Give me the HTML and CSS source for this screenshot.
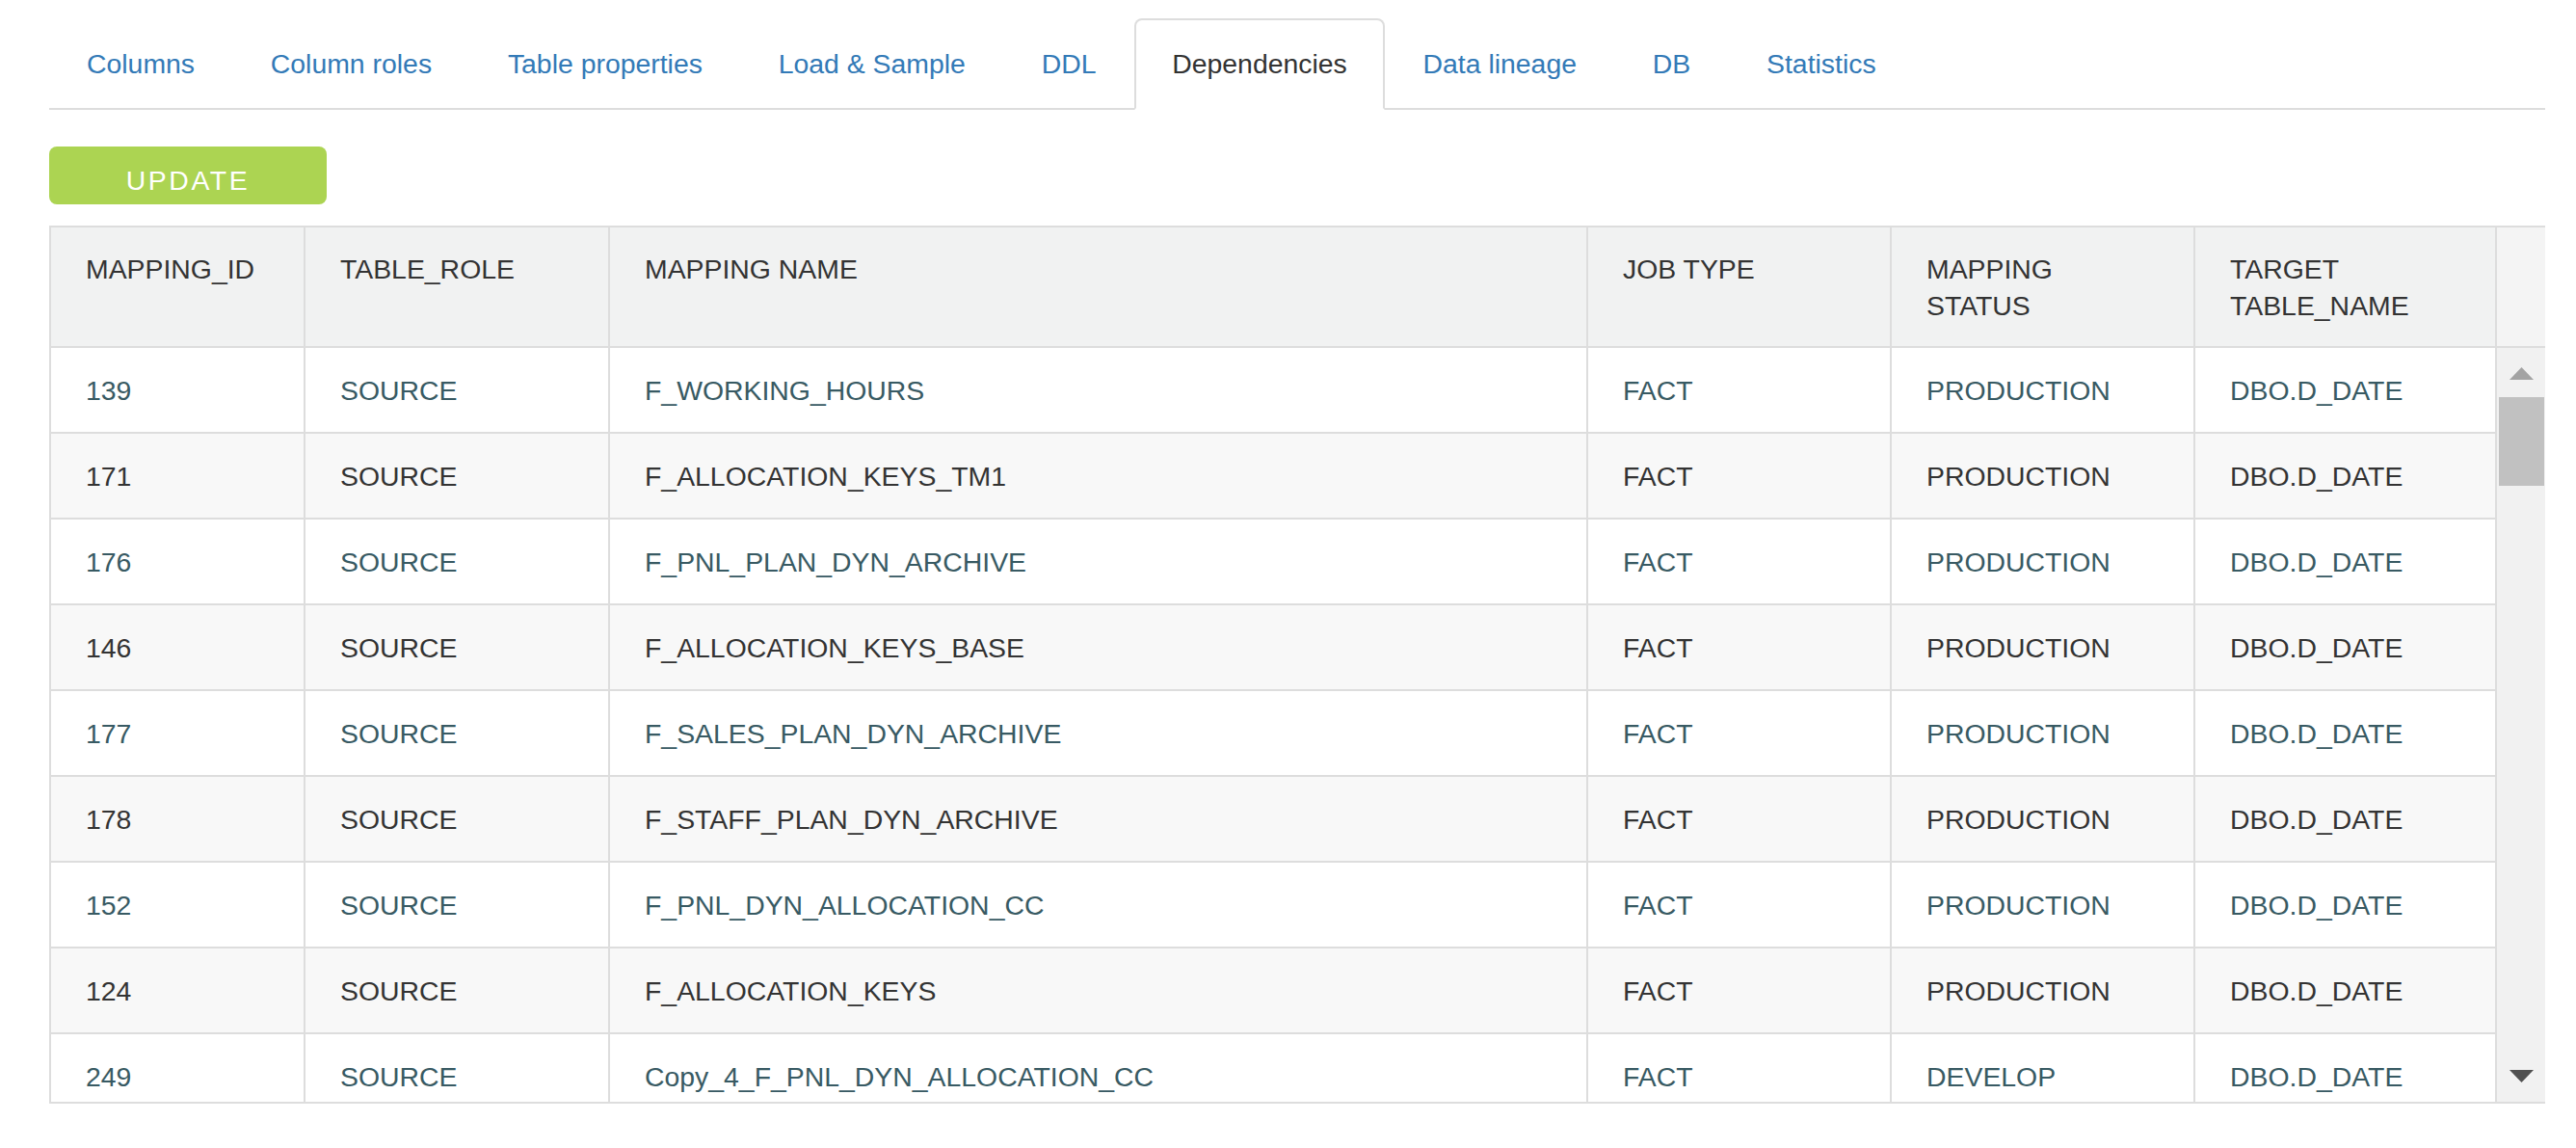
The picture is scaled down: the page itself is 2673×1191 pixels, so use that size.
FILE: index.html
```html
<!DOCTYPE html>
<html lang="en">
<head>
<meta charset="utf-8">
<title>Dependencies</title>
<link rel="stylesheet" href="styles.css">
</head>
<body>
<div class="page">
  <ul class="tabs">
    <li class="tab"><a href="#">Columns</a></li>
    <li class="tab"><a href="#">Column roles</a></li>
    <li class="tab"><a href="#">Table properties</a></li>
    <li class="tab"><a href="#">Load &amp; Sample</a></li>
    <li class="tab"><a href="#">DDL</a></li>
    <li class="tab active"><a href="#">Dependencies</a></li>
    <li class="tab"><a href="#">Data lineage</a></li>
    <li class="tab"><a href="#">DB</a></li>
    <li class="tab"><a href="#">Statistics</a></li>
  </ul>

  <button class="btn-update" type="button">UPDATE</button>

  <div class="grid">
    <div class="grid-head">
      <div class="row head-row">
        <div class="cell">MAPPING_ID</div>
        <div class="cell">TABLE_ROLE</div>
        <div class="cell">MAPPING NAME</div>
        <div class="cell">JOB TYPE</div>
        <div class="cell">MAPPING STATUS</div>
        <div class="cell">TARGET TABLE_NAME</div>
      </div>
      <div class="corner"></div>
    </div>
    <div class="grid-body">
      <div class="rows">
        <div class="row body-row odd">
          <div class="cell">139</div><div class="cell">SOURCE</div><div class="cell">F_WORKING_HOURS</div><div class="cell">FACT</div><div class="cell">PRODUCTION</div><div class="cell">DBO.D_DATE</div>
        </div>
        <div class="row body-row even">
          <div class="cell">171</div><div class="cell">SOURCE</div><div class="cell">F_ALLOCATION_KEYS_TM1</div><div class="cell">FACT</div><div class="cell">PRODUCTION</div><div class="cell">DBO.D_DATE</div>
        </div>
        <div class="row body-row odd">
          <div class="cell">176</div><div class="cell">SOURCE</div><div class="cell">F_PNL_PLAN_DYN_ARCHIVE</div><div class="cell">FACT</div><div class="cell">PRODUCTION</div><div class="cell">DBO.D_DATE</div>
        </div>
        <div class="row body-row even">
          <div class="cell">146</div><div class="cell">SOURCE</div><div class="cell">F_ALLOCATION_KEYS_BASE</div><div class="cell">FACT</div><div class="cell">PRODUCTION</div><div class="cell">DBO.D_DATE</div>
        </div>
        <div class="row body-row odd">
          <div class="cell">177</div><div class="cell">SOURCE</div><div class="cell">F_SALES_PLAN_DYN_ARCHIVE</div><div class="cell">FACT</div><div class="cell">PRODUCTION</div><div class="cell">DBO.D_DATE</div>
        </div>
        <div class="row body-row even">
          <div class="cell">178</div><div class="cell">SOURCE</div><div class="cell">F_STAFF_PLAN_DYN_ARCHIVE</div><div class="cell">FACT</div><div class="cell">PRODUCTION</div><div class="cell">DBO.D_DATE</div>
        </div>
        <div class="row body-row odd">
          <div class="cell">152</div><div class="cell">SOURCE</div><div class="cell">F_PNL_DYN_ALLOCATION_CC</div><div class="cell">FACT</div><div class="cell">PRODUCTION</div><div class="cell">DBO.D_DATE</div>
        </div>
        <div class="row body-row even">
          <div class="cell">124</div><div class="cell">SOURCE</div><div class="cell">F_ALLOCATION_KEYS</div><div class="cell">FACT</div><div class="cell">PRODUCTION</div><div class="cell">DBO.D_DATE</div>
        </div>
        <div class="row body-row odd">
          <div class="cell">249</div><div class="cell">SOURCE</div><div class="cell">Copy_4_F_PNL_DYN_ALLOCATION_CC</div><div class="cell">FACT</div><div class="cell">DEVELOP</div><div class="cell">DBO.D_DATE</div>
        </div>
      </div>
      <div class="vscroll">
        <svg class="arrow arrow-up" width="25" height="13" viewBox="0 0 25 13"><polygon points="12.5,0 25,13 0,13"/></svg>
        <div class="thumb"></div>
        <div class="spacer"></div>
        <svg class="arrow arrow-down" width="25" height="13" viewBox="0 0 25 13"><polygon points="0,0 25,0 12.5,13"/></svg>
      </div>
    </div>
  </div>
</div>
</body>
</html>
```

FILE: styles.css
```css
* { box-sizing: border-box; }

html, body {
  margin: 0;
  padding: 0;
  background: #ffffff;
}

body {
  font-family: "Liberation Sans", Arial, sans-serif;
  font-size: 28.4px;
  color: #333333;
}

.page {
  padding: 19px 32px 0 51px;
}

/* Tabs */
.tabs {
  list-style: none;
  margin: 0;
  padding: 0;
  display: flex;
  border-bottom: 2px solid #dddddd;
}

.tab {
  margin: 0 0.8px -2px 0;
}

.tab a {
  display: block;
  padding: 25px 37px 26px;
  line-height: 40px;
  border: 2px solid transparent;
  border-radius: 8px 8px 0 0;
  color: #337ab7;
  text-decoration: none;
  white-space: nowrap;
}

.tab.active a {
  color: #333333;
  background: #ffffff;
  border-color: #dddddd;
  border-bottom-color: transparent;
}

/* Button */
.btn-update {
  display: block;
  margin-top: 38px;
  width: 288px;
  height: 60px;
  padding: 10px 0 0 0;
  border: none;
  border-radius: 8px;
  background: #acd452;
  color: #ffffff;
  font-family: "Liberation Sans", Arial, sans-serif;
  font-size: 28.4px;
  line-height: 50px;
  letter-spacing: 2.6px;
  text-align: center;
}

/* Grid */
.grid {
  margin-top: 22px;
  width: 2590px;
  border-left: 2px solid #dddddd;
  border-top: 2px solid #dddddd;
  border-bottom: 2px solid #dddddd;
}

.grid-head {
  display: flex;
  border-bottom: 2px solid #dddddd;
  background: #f1f2f2;
}

.row {
  display: grid;
  grid-template-columns: 264px 316px 1015px 315px 315px 313px;
}

.cell {
  border-right: 2px solid #dddddd;
  line-height: 38px;
}

.head-row .cell {
  padding: 24px 38px 23px 36px;
  color: #333333;
}

.corner {
  flex: 1;
  background: #f4f4f4;
}

.grid-body {
  display: flex;
  height: 782px;
}

.rows {
  height: 782px;
  overflow: hidden;
}

.body-row .cell {
  padding: 25px 38px 24px 36px;
  white-space: nowrap;
}

.body-row {
  border-bottom: 2px solid #dddddd;
}

.body-row.odd {
  background: #ffffff;
  color: #385a63;
}

.body-row.even {
  background: #f8f8f8;
  color: #333333;
}

/* Scrollbar */
.vscroll {
  flex: 1;
  display: flex;
  flex-direction: column;
  align-items: center;
  padding: 20px 0 20px;
  background: #f1f1f1;
}

.arrow {
  display: block;
  flex: none;
}

.arrow-up { fill: #a3a3a3; }
.arrow-down { fill: #505050; }

.thumb {
  flex: none;
  margin-top: 18px;
  width: 47px;
  height: 92px;
  background: #c1c1c1;
}

.spacer { flex: 1; }
```
